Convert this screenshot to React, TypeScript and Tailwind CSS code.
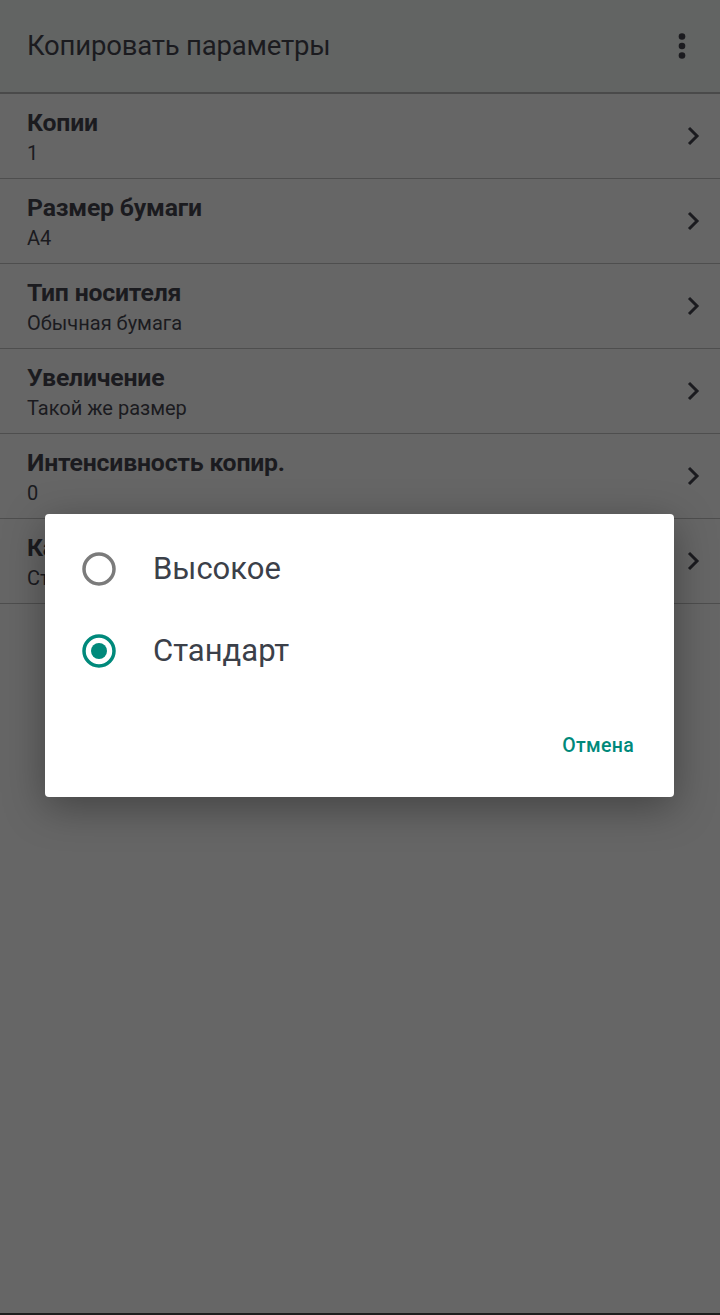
const rows = [
  { title: "Копии", value: "1" },
  { title: "Размер бумаги", value: "A4" },
  { title: "Тип носителя", value: "Обычная бумага" },
  { title: "Увеличение", value: "Такой же размер" },
  { title: "Интенсивность копир.", value: "0" },
  { title: "Качество копирования", value: "Стандарт" },
];

const options = [
  { label: "Высокое", checked: false },
  { label: "Стандарт", checked: true },
];

function Chevron() {
  return (
    <svg width="14" height="22" viewBox="0 0 14 22" fill="none">
      <path d="M3 3l8 8-8 8" stroke="#1b1b1f" strokeWidth="3" />
    </svg>
  );
}

function Radio({ checked }: { checked: boolean }) {
  return (
    <svg width="36" height="36" viewBox="0 0 36 36">
      <circle
        cx="18"
        cy="18"
        r="15"
        fill="none"
        stroke={checked ? "#00897b" : "#7b7b7b"}
        strokeWidth="3.5"
      />
      {checked && <circle cx="18" cy="18" r="8" fill="#00897b" />}
    </svg>
  );
}

export default function App() {
  return (
    <div
      className="relative w-[720px] h-[1315px] overflow-hidden bg-[#666666] text-[#1b1b1f]"
      style={{ fontFamily: "Roboto, 'Noto Sans', sans-serif" }}>
      <div className="h-[92px] bg-[#626463] flex items-center justify-between pl-[27px] pr-[34px]">
        <h1 className="text-[27.5px] tracking-[-0.2px] text-[#1b1b1f]">
          Копировать параметры
        </h1>
        <svg width="8" height="26" viewBox="0 0 8 26">
          <circle cx="4" cy="3.5" r="3.3" fill="#1b1b1f" />
          <circle cx="4" cy="13" r="3.3" fill="#1b1b1f" />
          <circle cx="4" cy="22.5" r="3.3" fill="#1b1b1f" />
        </svg>
      </div>
      <div className="h-[2px] bg-[#4a4a4a]" />

      <ul>
        {rows.map((row) => (
          <li
            key={row.title}
            className="h-[85px] border-b border-[#4e4e4e] flex items-center justify-between pl-[27px] pr-[20px]">
            <div className="flex flex-col pt-[4px]">
              <span className="text-[24.8px] font-bold leading-[30px] tracking-[-0.2px]">
                {row.title}
              </span>
              <span className="text-[20px] leading-[31px]">{row.value}</span>
            </div>
            <Chevron />
          </li>
        ))}
      </ul>

      <div className="absolute bottom-0 left-0 right-0 h-[2px] bg-[#1e1e1e]" />

      <div className="absolute left-[45px] top-[514px] w-[629px] h-[283px] bg-white rounded-[4px] shadow-[0_10px_40px_rgba(0,0,0,0.35)] flex flex-col">
        <div className="pt-[14px]">
          {options.map((opt) => (
            <div key={opt.label} className="h-[82px] flex items-center pl-[36px]">
              <Radio checked={opt.checked} />
              <span className="ml-[36px] text-[31px] text-[#3b4049]">
                {opt.label}
              </span>
            </div>
          ))}
        </div>
        <div className="flex justify-end pr-[40px] mt-[39px]">
          <span className="text-[19.5px] font-medium text-[#00897b] tracking-[0.3px]">
            Отмена
          </span>
        </div>
      </div>
    </div>
  );
}
